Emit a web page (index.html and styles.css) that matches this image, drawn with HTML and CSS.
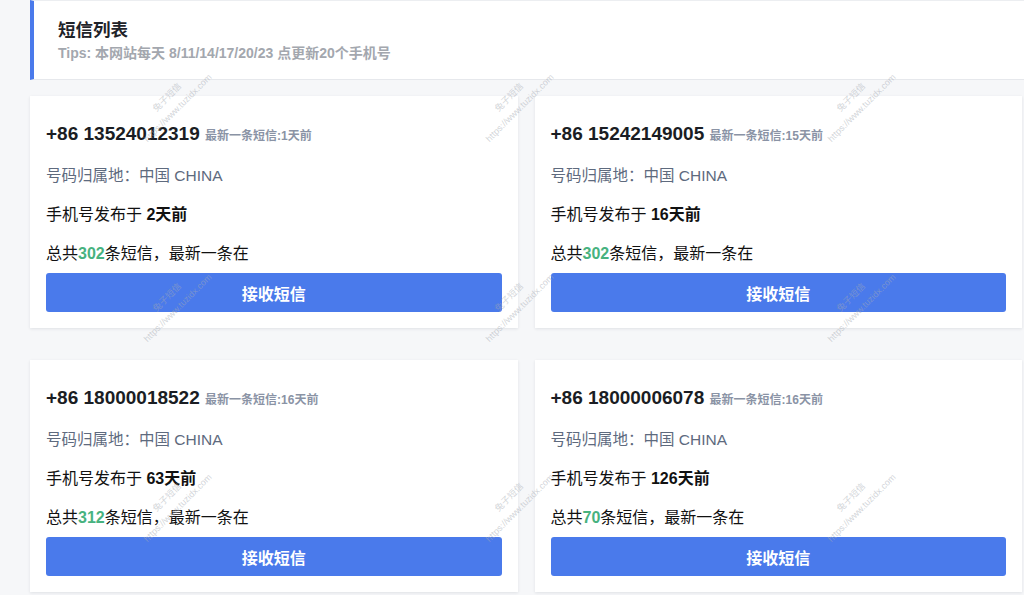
FILE: index.html
```html
<!DOCTYPE html>
<html lang="zh-CN">
<head>
    <meta charset="UTF-8">
    <meta name="viewport" content="width=device-width, initial-scale=1.0">
    <title>短信列表</title>
    <link rel="stylesheet" href="styles.css">
</head>
<body>
    <div class="page">
        <div class="list-header">
            <h1>短信列表</h1>
            <div class="tips">Tips: 本网站每天 8/11/14/17/20/23 点更新20个手机号</div>
        </div>

        <div class="card-grid">
            <div class="phone-card">
                <h3 class="phone-number">+86 13524012319 <span class="latest">最新一条短信:1天前</span></h3>
                <p class="location">号码归属地：中国 CHINA</p>
                <p>手机号发布于 <b>2天前</b></p>
                <p>总共<span class="count">302</span>条短信，最新一条在</p>
                <button type="button" class="receive-btn">接收短信</button>
            </div>

            <div class="phone-card">
                <h3 class="phone-number">+86 15242149005 <span class="latest">最新一条短信:15天前</span></h3>
                <p class="location">号码归属地：中国 CHINA</p>
                <p>手机号发布于 <b>16天前</b></p>
                <p>总共<span class="count">302</span>条短信，最新一条在</p>
                <button type="button" class="receive-btn">接收短信</button>
            </div>

            <div class="phone-card">
                <h3 class="phone-number">+86 18000018522 <span class="latest">最新一条短信:16天前</span></h3>
                <p class="location">号码归属地：中国 CHINA</p>
                <p>手机号发布于 <b>63天前</b></p>
                <p>总共<span class="count">312</span>条短信，最新一条在</p>
                <button type="button" class="receive-btn">接收短信</button>
            </div>

            <div class="phone-card">
                <h3 class="phone-number">+86 18000006078 <span class="latest">最新一条短信:16天前</span></h3>
                <p class="location">号码归属地：中国 CHINA</p>
                <p>手机号发布于 <b>126天前</b></p>
                <p>总共<span class="count">70</span>条短信，最新一条在</p>
                <button type="button" class="receive-btn">接收短信</button>
            </div>
        </div>
    </div>

    <!-- watermark layer over the whole page -->
    <div class="watermarks">
        <div class="wm">兔子短信<br>https://www.tuzidx.com</div>
        <div class="wm">兔子短信<br>https://www.tuzidx.com</div>
        <div class="wm">兔子短信<br>https://www.tuzidx.com</div>
        <div class="wm">兔子短信<br>https://www.tuzidx.com</div>
        <div class="wm">兔子短信<br>https://www.tuzidx.com</div>
        <div class="wm">兔子短信<br>https://www.tuzidx.com</div>
        <div class="wm">兔子短信<br>https://www.tuzidx.com</div>
        <div class="wm">兔子短信<br>https://www.tuzidx.com</div>
        <div class="wm">兔子短信<br>https://www.tuzidx.com</div>
    </div>
</body>
</html>
```

FILE: styles.css
```css
body {
    font-family: "Liberation Sans", "Noto Sans CJK SC", sans-serif;
    background-color: #f6f7f9;
    margin: 0;
    padding: 0;
    overflow: hidden;
}

.page {
    padding: 0 2px 40px 30px;
}

.list-header {
    background-color: #fff;
    border-top: 1px solid #eceef1;
    border-left: 4px solid #4a7aeb;
    border-bottom: 1px solid #e6e8ec;
    padding: 17px 24px 17px;
    margin-right: -2px;
}

.list-header h1 {
    margin: 0;
    font-size: 17.5px;
    line-height: 24px;
    font-weight: bold;
    color: #1f2329;
}

.tips {
    margin-top: 2px;
    font-size: 14px;
    line-height: 18px;
    font-weight: bold;
    color: #a3a7ae;
}

.card-grid {
    display: grid;
    grid-template-columns: 1fr 1fr;
    column-gap: 17px;
    row-gap: 32px;
    margin-top: 16px;
}

.phone-card {
    background: #fff;
    padding: 16px;
    box-shadow: 0 1px 3px rgba(30, 40, 60, 0.1);
}

.phone-number {
    margin: 11px 0 0;
    height: 22px;
    font-size: 19px;
    line-height: 22px;
    font-weight: bold;
    color: #1a1d23;
}

.latest {
    font-size: 12px;
    line-height: 1;
    font-weight: bold;
    color: #8a93a5;
}

.phone-card p {
    margin: 15px 0 0;
    height: 24px;
    font-size: 16px;
    line-height: 24px;
    color: #111;
}

.phone-card p.location {
    margin-top: 19px;
    font-size: 15.5px;
    color: #5e6a7e;
}

.count {
    color: #47b27f;
    font-weight: bold;
}

.receive-btn {
    display: block;
    width: 100%;
    height: 39px;
    margin-top: 7px;
    border: none;
    border-radius: 3px;
    background-color: #4a7aeb;
    color: #fff;
    font-family: inherit;
    font-size: 16px;
    font-weight: bold;
    cursor: pointer;
}

.watermarks {
    position: absolute;
    top: 0;
    left: 0;
    padding: 3px 0 0 2px;
    display: grid;
    grid-template-columns: repeat(3, 342px);
    grid-auto-rows: 200px;
    place-items: center;
    pointer-events: none;
}

.wm {
    transform: rotate(-45deg);
    text-align: center;
    font-size: 9px;
    line-height: 15px;
    white-space: nowrap;
    color: rgba(165, 170, 178, 0.5);
}
```
